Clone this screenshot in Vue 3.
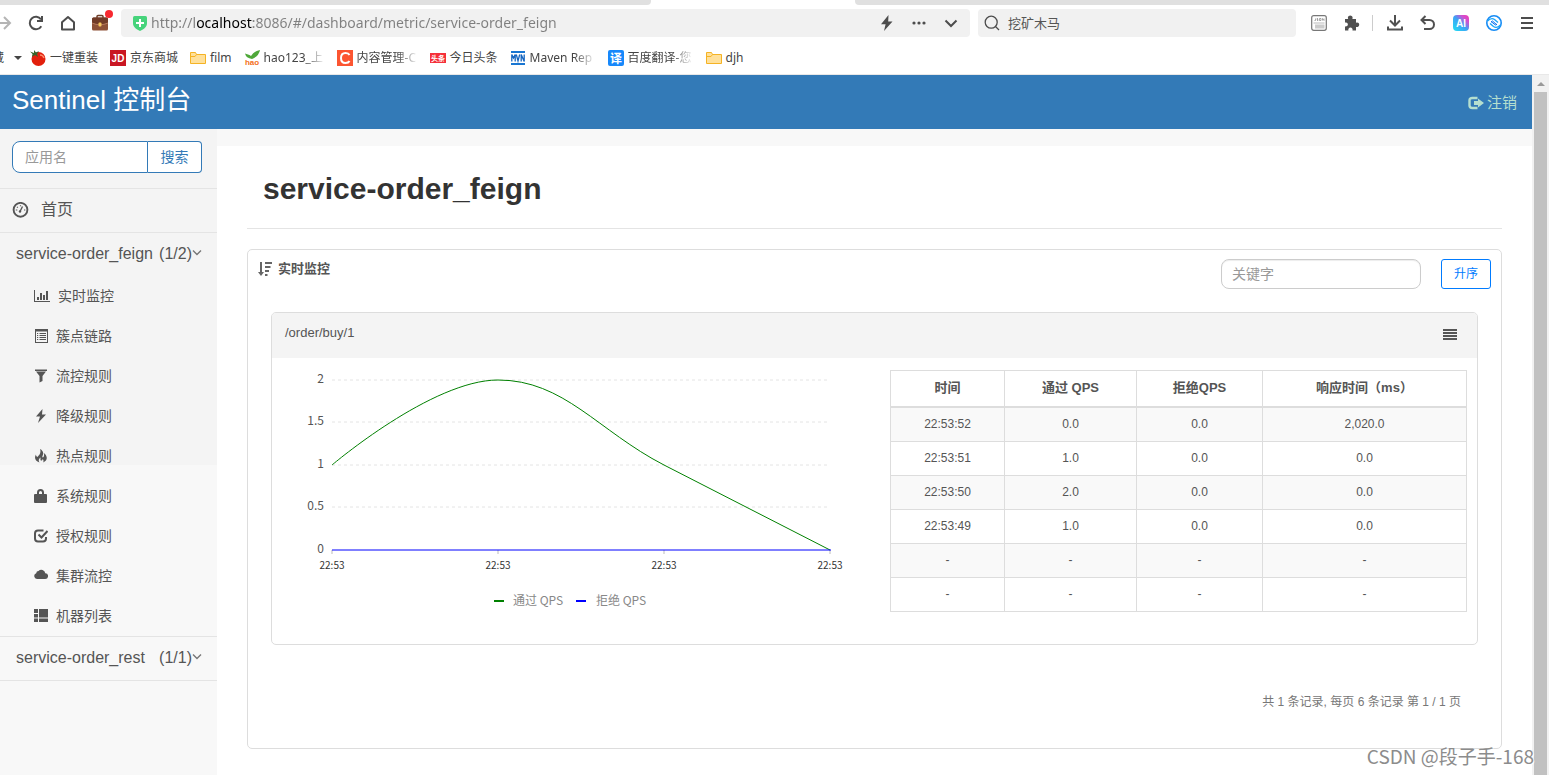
<script setup>
import { ref } from 'vue'

const url = ref('http://localhost:8086/#/dashboard/metric/service-order_feign')
const webQuery = ref('挖矿木马')
const appName = ref('')
const keyword = ref('')

const menu = [
  { icon: 'chart', label: '实时监控' },
  { icon: 'list', label: '簇点链路' },
  { icon: 'filter', label: '流控规则' },
  { icon: 'flash', label: '降级规则' },
  { icon: 'fire', label: '热点规则' },
  { icon: 'lock', label: '系统规则' },
  { icon: 'check', label: '授权规则' },
  { icon: 'cloud', label: '集群流控' },
  { icon: 'th', label: '机器列表' },
]

const headers = ['时间', '通过 QPS', '拒绝QPS', '响应时间（ms）']
const rows = [
  ['22:53:52', '0.0', '0.0', '2,020.0'],
  ['22:53:51', '1.0', '0.0', '0.0'],
  ['22:53:50', '2.0', '0.0', '0.0'],
  ['22:53:49', '1.0', '0.0', '0.0'],
  ['-', '-', '-', '-'],
  ['-', '-', '-', '-'],
]

const yAxis = [
  { y: 22, label: '2' },
  { y: 64, label: '1.5' },
  { y: 107, label: '1' },
  { y: 149, label: '0.5' },
  { y: 192, label: '0' },
]
const xTicks = [60, 226, 392, 558]
</script>

<template>
  <div class="window">
    <header class="browser">
      <div class="tabs"><span class="tab-left"></span><span class="tab-right"></span></div>

      <div class="toolbar">
        <div class="nav-buttons">
          <button type="button" aria-label="前进">
            <svg width="16" height="16" viewBox="0 0 16 16" fill="none" stroke="#b5b5b5" stroke-width="2"><path d="M0 8H14M8 2l6 6-6 6" /></svg>
          </button>
          <button type="button" aria-label="刷新">
            <svg width="16" height="16" viewBox="0 0 16 16" fill="none" stroke="#4d4d4d" stroke-width="2"><path d="M13.3 11.2A6.2 6.2 0 1 1 13 4.4" /><path d="M14 1v5H9" /></svg>
          </button>
          <button type="button" aria-label="主页">
            <svg width="16" height="16" viewBox="0 0 16 16" fill="none" stroke="#4d4d4d" stroke-width="2" stroke-linejoin="round"><path d="M2 14.5V7.2L8 2l6 5.200V14.500Z" /></svg>
          </button>
          <button type="button" aria-label="工具箱" class="toolbox">
            <svg width="18" height="18" viewBox="0 0 18 18"><path d="M6 4V2.500Q6 1.500 7 1.500h4q1 0 1 1V4" fill="none" stroke="#6e3d28" stroke-width="1.500" /><rect x="1" y="3.500" width="16" height="13" rx="1.500" fill="#8d5137" /><path d="M1 5q0-1.500 1.500-1.500h13Q17 3.500 17 5v4q-8 3.500-16 0Z" fill="#703b27" /><path d="M1 9q8 3.500 16 0" fill="none" stroke="#c18566" stroke-width=".8" /><rect x="7.500" y="8.500" width="3" height="4" rx="1" fill="#f6c85f" /></svg>
            <span class="dot"></span>
          </button>
        </div>

        <label class="address">
          <svg width="16" height="16" viewBox="0 0 16 16"><path d="M2.500 1h11Q15 1 15 2.500V8c0 4-3 6-7 8-4-2-7-4-7-8V2.500Q1 1 2.500 1Z" fill="#46d37b" /><path d="M8 4v8M4 8h8" stroke="#fff" stroke-width="2" /></svg>
          <input v-model="url" type="text" aria-label="地址" />
          <button type="button" aria-label="极速模式">
            <svg width="16" height="16" viewBox="0 0 16 16" fill="#4d4d4d"><path d="M9.500 0 2 9.300h4.600L5 16l8.500-9.600H9.200Z" /></svg>
          </button>
          <button type="button" aria-label="更多">
            <svg width="16" height="16" viewBox="0 0 16 16" fill="#4d4d4d"><circle cx="3" cy="8" r="1.600" /><circle cx="8" cy="8" r="1.600" /><circle cx="13" cy="8" r="1.600" /></svg>
          </button>
          <button type="button" aria-label="展开">
            <svg width="16" height="16" viewBox="0 0 16 16" fill="none" stroke="#4d4d4d" stroke-width="2"><path d="m2.500 5.500 5.500 5.500 5.500-5.500" /></svg>
          </button>
        </label>

        <label class="web-search">
          <svg width="16" height="16" viewBox="0 0 16 16" fill="none" stroke="#4d4d4d" stroke-width="1.300"><circle cx="7.200" cy="7.200" r="6" /><path d="m11.500 11.500 3.500 3.500" /></svg>
          <input v-model="webQuery" type="text" aria-label="搜索网页" />
        </label>

        <div class="extensions">
          <button type="button" aria-label="JSON">
            <svg width="16" height="16" viewBox="0 0 16 16"><rect x=".7" y=".7" width="14.600" height="14.600" rx="2" fill="#fff" stroke="#777" stroke-width="1.200" /><path d="M4.500 3.500v2H3.500M7 3.500H6v1h1v1H6M8.500 3.500h1.500v2H8.500ZM11.500 5.500v-2l1.500 2v-2" fill="none" stroke="#888" stroke-width=".7" /><rect x="2.500" y="7.500" width="11" height="1" fill="#bbb" /><rect x="4" y="9.500" width="9.500" height="4" fill="#ccc" /></svg>
          </button>
          <button type="button" aria-label="扩展">
            <svg width="16" height="16" viewBox="0 0 16 16" fill="#505050"><path d="M1 4h3.300a2.300 2.300 0 1 1 3.900 0H12v3.700a2.300 2.300 0 1 1 0 4.200V15.500H8.400a2.100 2.100 0 1 0-3.900 0H1v-4.300a2 2 0 1 0 0-3.600Z" /></svg>
          </button>
          <span class="rule"></span>
          <button type="button" aria-label="下载">
            <svg width="16" height="16" viewBox="0 0 16 16" fill="none" stroke="#505050" stroke-width="2"><path d="M8 0v10M3 5.500 8 10.500l5-5M1 11.500V14.500h14V11.500" /></svg>
          </button>
          <button type="button" aria-label="恢复">
            <svg width="16" height="16" viewBox="0 0 16 16" fill="none" stroke="#505050" stroke-width="2"><path d="M2 5h7.500a4.500 4.500 0 0 1 0 9H4M5.500 1 1.500 5l4 4" /></svg>
          </button>
          <button type="button" aria-label="AI 助手">
            <svg width="16" height="16" viewBox="0 0 16 16">
              <defs><linearGradient id="ai-fill" x1="0" y1="1" x2="1" y2="0"><stop offset="0" stop-color="#1fe0f2" /><stop offset=".5" stop-color="#3fa0f5" /><stop offset=".75" stop-color="#d050d0" /><stop offset="1" stop-color="#f238b0" /></linearGradient></defs>
              <rect width="16" height="16" rx="4" fill="url(#ai-fill)" /><text x="8" y="11.500" text-anchor="middle" class="badge-text ai">AI</text>
            </svg>
          </button>
          <button type="button" aria-label="同步">
            <svg width="16" height="16" viewBox="0 0 16 16" fill="none"><circle cx="8" cy="8" r="7.200" stroke="#178cf5" stroke-width="1.600" /><path d="M1.500 6C4 3.500 6.500 3 8.500 4.500l3.500 3M14.500 10C12 12.500 9.500 13 7.500 11.500l-3.500-3" stroke="#1aa5f8" stroke-width="1.400" /><path d="m5 7 1.500-1 4.500 4M5 6.500 9.500 10 11 9" stroke="#0a6ff0" /></svg>
          </button>
          <button type="button" aria-label="菜单">
            <svg width="16" height="16" viewBox="0 0 16 16" stroke="#4d4d4d" stroke-width="2"><path d="M2 3h12M2 8h12M2 13h12" /></svg>
          </button>
        </div>
      </div>

      <nav class="bookmarks" aria-label="书签">
        <button type="button" class="favorites"><span>藏</span><i class="caret"></i></button>
        <a href="#">
          <svg width="16" height="16" viewBox="0 0 16 16"><circle cx="8.500" cy="9" r="7" fill="#e21f0c" /><path d="M10 5q3 0 4 3" stroke="#ff8a6a" stroke-width="1.500" fill="none" /><path d="M0 1.500 4 3V0l2 2.500L9 1 7 4l1 3-3-2-3 2 .5-3Z" fill="#35622a" /></svg>
          <span>一键重装</span>
        </a>
        <a href="#">
          <svg width="16" height="16" viewBox="0 0 16 16"><rect width="16" height="16" fill="#c91623" /><text x="8" y="12" text-anchor="middle" class="badge-text jd">JD</text></svg>
          <span>京东商城</span>
        </a>
        <a href="#">
          <svg width="16" height="16" viewBox="0 0 16 16"><path d="M.5 2.500h5l1 2h9v9H.5Z" fill="#ffe09a" stroke="#f5b324" /><path d="M.5 6.500H5l1.500-2" fill="none" stroke="#f5b324" /></svg>
          <span>film</span>
        </a>
        <a href="#">
          <svg width="16" height="16" viewBox="0 0 16 16"><path d="M1 3.500 5.500 5 7 6q3-5 9-6-1 6-8 9Q2 8 1 3.500Z" fill="#4fa83a" /><text x="8" y="15" text-anchor="middle" class="badge-text hao">hao</text></svg>
          <span class="fade">hao123_上</span>
        </a>
        <a href="#">
          <svg width="16" height="16" viewBox="0 0 16 16"><rect width="16" height="16" fill="#fc5531" /><path d="M12.500 5Q11.500 3 8.500 3 4 3 4 8t4.500 5q3 0 4-2" fill="none" stroke="#fff" stroke-width="2" /></svg>
          <span class="fade">内容管理-C</span>
        </a>
        <a href="#">
          <svg width="16" height="16" viewBox="0 0 16 16"><rect y="3" width="16" height="10" fill="#f5303a" /><text x="8" y="11" text-anchor="middle" class="badge-text tt">头条</text></svg>
          <span>今日头条</span>
        </a>
        <a href="#">
          <svg width="16" height="16" viewBox="0 0 16 16"><path d="M1 2h14M1 14h14" stroke="#1976d2" stroke-width="2" /><path d="M1.800 11.500v-7L3.500 8l1.700-3.500v7M6.300 4.500 8 11l1.700-6.500M11.200 11.500v-7l3 7v-7" fill="none" stroke="#1565c0" stroke-width="1.300" /></svg>
          <span class="fade wide">Maven Rep</span>
        </a>
        <a href="#">
          <svg width="16" height="16" viewBox="0 0 16 16"><rect width="16" height="16" rx="2" fill="#1788fb" /><text x="8" y="12.500" text-anchor="middle" class="badge-text yi">译</text></svg>
          <span class="fade wide">百度翻译-您</span>
        </a>
        <a href="#">
          <svg width="16" height="16" viewBox="0 0 16 16"><path d="M.5 2.500h5l1 2h9v9H.5Z" fill="#ffe09a" stroke="#f5b324" /><path d="M.5 6.500H5l1.500-2" fill="none" stroke="#f5b324" /></svg>
          <span>djh</span>
        </a>
      </nav>
    </header>

    <div class="viewport">
      <div class="app">
        <div class="topbar">
          <a href="#" class="brand">Sentinel 控制台</a>
          <a href="#" class="logout">
            <svg width="16" height="14" viewBox="0 0 16 14" fill="none" stroke="#b5dfcf" stroke-width="2.400"><path d="M9.500 2H4.500Q1.500 2 1.500 4.500v5Q1.500 12 4.500 12h5" /><path d="M10 2.500 16 7l-6 4.500V9H6V5h4Z" fill="#b5dfcf" stroke="none" /></svg>
            <span>注销</span>
          </a>
        </div>

        <div class="body">
          <aside class="sidebar">
            <form class="app-search" @submit.prevent>
              <input v-model="appName" type="text" placeholder="应用名" aria-label="应用名" />
              <button type="submit">搜索</button>
            </form>

            <nav>
              <a href="#" class="home">
                <svg width="17" height="16" viewBox="0 0 17 16" fill="none" stroke="#555"><circle cx="8.500" cy="7.800" r="6.900" stroke-width="1.900" /><path d="m8 9.500 2.500-5" stroke-width="1.400" /><circle cx="8" cy="9.500" r="1.200" fill="#555" stroke="none" /><path d="M3.800 8h1.500M12 8h1.300M5 4.800l.8.800M8.500 3.300v1" stroke-width="1.200" /></svg>
                <span>首页</span>
              </a>
              <a href="#" class="service">
                <span>service-order_feign</span>
                <span class="count">(1/2)<svg width="10" height="16" viewBox="0 0 10 16" fill="none" stroke="#777" stroke-width="1.400"><path d="m1 4.500 4 4 4-4" /></svg></span>
              </a>
              <ul class="submenu">
                <li v-for="item in menu" :key="item.icon">
                  <a href="#">
                    <svg v-if="item.icon === 'chart'" width="16" height="14" viewBox="0 0 16 14" fill="#555"><path d="M0 1h1v11h15v1H0ZM3 8h2v3H3ZM6 4h2v7H6ZM9 6h2v5H9ZM12 2h2v9h-2Z" /></svg>
                    <svg v-else-if="item.icon === 'list'" width="14" height="14" viewBox="0 0 14 14" fill="#555"><path fill-rule="evenodd" d="M1 0h13v14H1ZM2 2.500V13h11V2.500Z" /><path d="M3 4h1.200v1H3ZM5.500 4H12v1H5.500ZM3 6h1.200v1H3ZM5.500 6H12v1H5.500ZM3 8h1.200v1H3ZM5.500 8H12v1H5.500ZM3 10h1.200v1H3ZM5.500 10H12v1H5.500Z" /></svg>
                    <svg v-else-if="item.icon === 'filter'" width="14" height="14" viewBox="0 0 14 14" fill="#555"><path d="M1 .5h12V2H1ZM2 2.500h10L8.500 7v5L5.500 13.500V7Z" /></svg>
                    <svg v-else-if="item.icon === 'flash'" width="14" height="14" viewBox="0 0 14 14" fill="#555"><path d="M8.500 0 2 7.500h4L4 14l8-8.500H8Z" /></svg>
                    <svg v-else-if="item.icon === 'fire'" width="14" height="14" viewBox="0 0 14 14" fill="#555"><path d="M5.500 13.500C1 12 0 8.500 2 5.500c0 1.500.5 2 1.500 2.500C5 6 7.500 4.500 6 0c3 1.500 4 4 2.500 7-.6 1 .3 2 1 1 .8-1 .7-2.500.3-4 3.500 2.500 4.700 7.500-.8 9.500 1-1.500.5-2.800-.5-3.500 0 1-.5 1.500-1.200 1.500-1 0-1-1.500-.6-3C5 9.500 4 11.500 5.500 13.500Z" /></svg>
                    <svg v-else-if="item.icon === 'lock'" width="14" height="14" viewBox="0 0 14 14" fill="#555"><path fill-rule="evenodd" d="M3 5V3.500Q3 0 6.500 0T10 3.500V5h2q1 0 1 1v7q0 1-1 1H1q-1 0-1-1V6Q0 5 1 5ZM5 5h3V3.500Q8 2 6.500 2T5 3.500Z" /></svg>
                    <svg v-else-if="item.icon === 'check'" width="14" height="14" viewBox="0 0 14 14" fill="none" stroke="#555" stroke-width="2"><path d="M9.500 1.500H4Q1 1.500 1 4.500v5Q1 12.500 4 12.500h5Q12 12.500 12 9.500V8" /><path d="m4.500 5.500 3 3 6-6.500" /></svg>
                    <svg v-else-if="item.icon === 'cloud'" width="14" height="14" viewBox="0 0 14 14" fill="#555"><path d="M3 10a3 3 0 0 1-.8-5.800A2.500 2.500 0 0 1 4.500 2 4 4 0 0 1 11.300 4.200 2.900 2.900 0 0 1 11 10Z" /></svg>
                    <svg v-else width="14" height="14" viewBox="0 0 14 14" fill="#555"><path d="M0 0h4v4H0ZM5 0h9v4H5ZM0 5h4v3.500H0ZM5 4h9v4.500H5ZM0 9.500h4V13H0ZM5 9.500h9V13H5Z" /></svg>
                    <span>{{ item.label }}</span>
                  </a>
                </li>
              </ul>
              <a href="#" class="service last">
                <span>service-order_rest</span>
                <span class="count">(1/1)<svg width="10" height="16" viewBox="0 0 10 16" fill="none" stroke="#777" stroke-width="1.400"><path d="m1 4.500 4 4 4-4" /></svg></span>
              </a>
            </nav>
          </aside>

          <main>
            <h1>service-order_feign</h1>

            <section class="card">
              <div class="card-head">
                <svg width="14" height="14" viewBox="0 0 14 14" fill="#666"><path d="M2 0h2v10h2l-3 4-3-4h2ZM7 0h7v2H7ZM7 4h5.500v2H7ZM7 8h4v2H7ZM7 12h2.500v2H7Z" /></svg>
                <h2>实时监控</h2>
                <input v-model="keyword" type="text" placeholder="关键字" aria-label="关键字" />
                <button type="button">升序</button>
              </div>

              <article class="metric">
                <div class="metric-head">
                  <span>/order/buy/1</span>
                  <button type="button" aria-label="列表">
                    <svg width="14" height="14" viewBox="0 0 14 14" fill="#555"><path d="M0 1h14v2H0ZM0 4h14v2H0ZM0 7h14v2H0ZM0 10h14v2H0Z" /></svg>
                  </button>
                </div>
                <div class="metric-body">
                  <svg class="chart" viewBox="0 0 618 286" role="img" aria-label="通过 QPS 与拒绝 QPS">
                    <g v-for="a in yAxis" :key="a.label">
                      <line v-if="a.y < 192" x1="60" x2="558" :y1="a.y" :y2="a.y" stroke="#e4e4e4" stroke-dasharray="3 3" />
                      <text x="52" :y="a.y + 3" text-anchor="end" class="y-label">{{ a.label }}</text>
                    </g>
                    <g v-for="x in xTicks" :key="x">
                      <line :x1="x" :x2="x" y1="192" y2="196" stroke="#bbb" />
                      <text :x="x" y="211" text-anchor="middle" class="x-label">22:53</text>
                    </g>
                    <path d="M60 107C60 107 160 22 226 22C292 22 326 73 392 107L558 192" fill="none" stroke="#008000" />
                    <path d="M60 192H559" stroke="#00f" />
                    <path d="M222 243h10" stroke="#008000" stroke-width="2" />
                    <text x="241" y="247" class="legend">通过 QPS</text>
                    <path d="M304 243h10" stroke="#00f" stroke-width="2" />
                    <text x="324" y="247" class="legend">拒绝 QPS</text>
                  </svg>
                  <div class="table-wrap">
                    <table>
                      <thead>
                        <tr><th v-for="h in headers" :key="h" scope="col">{{ h }}</th></tr>
                      </thead>
                      <tbody>
                        <tr v-for="(r, i) in rows" :key="i"><td v-for="(c, j) in r" :key="j">{{ c }}</td></tr>
                      </tbody>
                    </table>
                  </div>
                </div>
              </article>

              <p class="pager">共 1 条记录, 每页 6 条记录 第 1 / 1 页</p>
            </section>
          </main>
        </div>
      </div>
      <div class="scrollbar"><i></i><span></span></div>
    </div>
    <div class="watermark">CSDN @段子手-168</div>
  </div>
</template>

<style>
body {
  overflow: hidden;
}
</style>

<style scoped>
.window {
  position: relative;
  display: flex;
  flex-direction: column;
  height: 100vh;
  background: #fff;
  color: #555;
  font: 14px/20px "Liberation Sans", "Noto Sans CJK SC", sans-serif;
}
.window * {
  box-sizing: border-box;
}
svg {
  flex: none;
  display: block;
}
a {
  color: inherit;
  text-decoration: none;
}
button,
input {
  margin: 0;
  padding: 0;
  border: 0;
  background: none;
  color: inherit;
  font: inherit;
  outline: 0;
}

.browser {
  flex: none;
  font-family: "Noto Sans", "Noto Sans CJK SC", sans-serif;
  border-bottom: 1px solid #e8e8e8;
}
.tabs {
  display: flex;
  height: 5px;
}
.tab-left,
.tab-right {
  background: #e0e0e0;
}
.tab-left {
  width: 42%;
  margin-right: 204px;
  border-bottom-right-radius: 4px;
}
.tab-right {
  flex: 1;
  border-bottom-left-radius: 4px;
}
.toolbar {
  display: flex;
  align-items: center;
  height: 36px;
  padding-right: 6px;
}
.toolbar button {
  display: flex;
  align-items: center;
  justify-content: center;
  height: 28px;
}
.nav-buttons {
  display: flex;
  margin: 0 6px 0 -12px;
}
.nav-buttons button {
  width: 32px;
}
.nav-buttons button:last-child {
  width: 31px;
}
.toolbox {
  position: relative;
}
.dot {
  position: absolute;
  top: 1px;
  right: 2px;
  width: 8px;
  height: 8px;
  border-radius: 50%;
  background: #f7282f;
}
.address,
.web-search {
  display: flex;
  align-items: center;
  height: 28px;
  border-radius: 4px;
  background: #f1f1f1;
}
.address {
  flex: 1;
  padding: 0 3px 0 11px;
}
.address input {
  flex: 1;
  min-width: 0;
  height: 24px;
  margin-left: 3px;
  padding-bottom: 2px;
  font-size: 14px;
  color: transparent;
  background: linear-gradient(to right, #7f7f7f 44px, #000 44px, #000 102px, #7f7f7f 102px);
  background-clip: text;
  -webkit-background-clip: text;
}
.address button {
  width: 32px;
}
.web-search {
  flex: 0 0 318px;
  margin-left: 8px;
  padding: 0 6px;
}
.web-search input {
  flex: 1;
  min-width: 0;
  height: 24px;
  margin-left: 8px;
  padding-bottom: 2px;
  font-size: 13px;
}
.extensions {
  display: flex;
  align-items: center;
  margin-left: 6px;
}
.extensions button {
  width: 33px;
}
.rule {
  width: 1px;
  height: 16px;
  margin: 0 5px 0 4px;
  background: #ccc;
}
.badge-text {
  fill: #fff;
  font-family: "Liberation Sans", "Noto Sans CJK SC", sans-serif;
  font-weight: bold;
}
.ai,
.jd {
  font-size: 10px;
}
.hao {
  fill: #f36f21;
  font-size: 8px;
}
.tt {
  font-size: 7px;
}
.yi {
  font-size: 12px;
}
.bookmarks {
  display: flex;
  align-items: center;
  gap: 12px;
  height: 33px;
  overflow: hidden;
  color: #444;
  font-size: 12px;
  white-space: nowrap;
}
.bookmarks a {
  display: flex;
  align-items: center;
  gap: 4px;
}
.favorites {
  display: flex;
  align-items: center;
  gap: 10px;
  margin: 0 -4px 0 -8px;
}
.caret {
  border: 4px solid transparent;
  border-top-color: #444;
  border-bottom: 0;
}
.fade {
  width: 61px;
  mask-image: linear-gradient(to right, #000 66%, transparent 100%);
}
.fade.wide {
  width: 66px;
}

.viewport {
  flex: 1;
  display: flex;
  min-height: 0;
}
.app {
  flex: 1;
  display: flex;
  flex-direction: column;
  min-width: 0;
}
.topbar {
  display: flex;
  align-items: center;
  justify-content: space-between;
  height: 54px;
  padding: 0 15px 0 12px;
  background: #337ab7;
}
.brand {
  padding-bottom: 4px;
  color: #fff;
  font-size: 26px;
  line-height: 32px;
}
.logout {
  display: flex;
  align-items: center;
  gap: 3px;
  padding-top: 2px;
  color: #b5dfcf;
  font-size: 15px;
}
.body {
  flex: 1;
  display: flex;
  min-height: 0;
}
.sidebar {
  flex: none;
  width: 217px;
  background: linear-gradient(#f4f4f4 336px, #f8f8f8 336px);
}
.app-search {
  display: flex;
  height: 32px;
  margin: 12px 15px 15px 12px;
  color: #337ab7;
}
.app-search input {
  flex: 1;
  min-width: 0;
  padding: 0 12px;
  border: 1px solid #337ab7;
  border-radius: 8px 0 0 8px;
  background: #fff;
}
.app-search button {
  width: 54px;
  border: 1px solid #337ab7;
  border-left: 0;
  border-radius: 0 4px 4px 0;
  background: #fff;
}
::placeholder {
  color: #999;
  opacity: 1;
}
.home,
.service {
  display: flex;
  align-items: center;
  height: 44px;
  padding: 0 15px 2px 16px;
  border-top: 1px solid #e4e4e4;
  font-size: 16px;
}
.home {
  gap: 12px;
  padding-left: 12px;
}
.service {
  justify-content: space-between;
}
.service.last {
  height: 45px;
  border-bottom: 1px solid #e4e4e4;
}
.count {
  display: flex;
  align-items: center;
}
.submenu {
  margin: 0;
  padding: 0;
  list-style: none;
}
.submenu a {
  display: flex;
  align-items: center;
  gap: 8px;
  height: 40px;
  padding-left: 34px;
}

main {
  flex: 1;
  min-width: 0;
  padding: 0 30px;
  border-top: 17px solid #f8f8f8;
  background: #fff;
}
h1 {
  margin: 0 0 20px;
  padding: 23px 16px 19px;
  border-bottom: 1px solid #e4e4e4;
  color: #333;
  font-size: 30px;
  line-height: 40px;
}
.card {
  border: 1px solid #ddd;
  border-radius: 5px;
}
.card-head {
  display: flex;
  align-items: center;
  padding: 9px 10px 0;
}
h2 {
  flex: 1;
  margin: 0;
  padding-left: 6px;
  font-size: 13px;
  line-height: 20px;
}
.card-head > svg,
h2 {
  margin-bottom: 10px;
}
.card-head input {
  width: 200px;
  height: 30px;
  margin-right: 20px;
  padding: 0 10px;
  border: 1px solid #ccc;
  border-radius: 8px;
  box-shadow: inset 0 1px 1px rgba(0, 0, 0, 0.075);
}
.card-head button {
  width: 50px;
  height: 30px;
  border: 1px solid #007bff;
  border-radius: 3px;
  color: #007bff;
  font-size: 12px;
}
.metric {
  margin: 23px 23px 0;
  border: 1px solid #ddd;
  border-radius: 5px;
}
.metric-head {
  display: flex;
  align-items: center;
  justify-content: space-between;
  height: 45px;
  padding: 0 20px 6px 13px;
  border-radius: 4px 4px 0 0;
  background: #f4f4f4;
  font-size: 13px;
}
.metric-head button {
  padding-top: 4px;
}
.metric-body {
  display: flex;
}
.chart {
  flex: 1;
  min-width: 0;
}
.y-label {
  fill: #555;
  font: 12px "Noto Sans CJK SC", sans-serif;
}
.x-label {
  fill: #333;
  font: 10px "Noto Sans CJK SC", sans-serif;
}
.legend {
  fill: #888;
  font: 12px "Noto Sans CJK SC", sans-serif;
}
.table-wrap {
  flex: 0 0 577px;
  margin: 12px 10px 0 0;
}
table {
  width: 100%;
  border-collapse: collapse;
  table-layout: fixed;
  font-size: 12px;
  line-height: 17px;
  text-align: center;
}
th,
td {
  padding: 8px;
  border: 1px solid #ddd;
}
th {
  height: 36px;
  padding: 7px 8px 9px;
  border-bottom-width: 2px;
  font-size: 13px;
}
th:nth-child(1) {
  width: 114px;
}
th:nth-child(2) {
  width: 132px;
}
th:nth-child(3) {
  width: 126px;
}
tbody tr:nth-child(odd) {
  background: #f9f9f9;
}
.pager {
  margin: 0;
  padding: 47px 40px 36px;
  color: #777;
  font-size: 12px;
  text-align: right;
}
.scrollbar {
  flex: 0 0 17px;
  display: flex;
  flex-direction: column;
  align-items: center;
  background: #f1f1f1;
}
.scrollbar i {
  margin: 7px 0 6px;
  border: 4px solid transparent;
  border-top: 0;
  border-bottom-color: #999;
}
.scrollbar span {
  flex: 1;
  width: 13px;
  background: #c1c1c1;
}
.watermark {
  position: absolute;
  right: 15px;
  bottom: 6px;
  color: #8c8c8c;
  font: 19px/26px "Noto Sans CJK SC", sans-serif;
  text-shadow: 1px 1px 0 #fff;
}
</style>
